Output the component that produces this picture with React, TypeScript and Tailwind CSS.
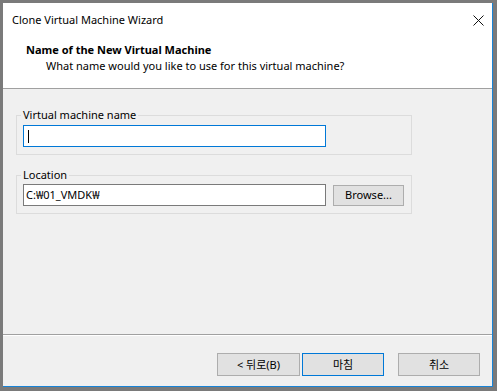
import React from 'react';

const font = "font-['Noto_Sans','Noto_Sans_CJK_KR',sans-serif]";

const CloseIcon: React.FC = () => (
  <svg width="11" height="11" viewBox="0 0 11 11" className="block">
    <path d="M0.5 0.5 L10.5 10.5 M10.5 0.5 L0.5 10.5" stroke="#111" strokeWidth="1" />
  </svg>
);

const App: React.FC = () => {
  return (
    <div className={`w-[497px] h-[391px] bg-[#7a7a7a] pt-[3px] pl-[3px] pr-[4px] pb-[4px] text-[11px] text-black ${font}`}>
      <div className="h-full flex flex-col bg-[#f0f0f0] border-r border-b border-[#1883d7]">
        {/* title bar */}
        <div className="h-[34px] bg-white flex items-center justify-between pl-[9px] pr-[8px]">
          <span className="leading-4">Clone Virtual Machine Wizard</span>
          <CloseIcon />
        </div>

        {/* header */}
        <div className="h-[52px] bg-white pt-[5px] pl-[23px] border-b border-[#a0a0a0]">
          <div className="font-bold leading-4">Name of the New Virtual Machine</div>
          <div className="leading-4 pl-[20px]">What name would you like to use for this virtual machine?</div>
        </div>

        {/* body */}
        <div className="flex-1 border-b border-[#a0a0a0] pl-[13px]">
          <fieldset className="mt-[18px] w-[396px] border border-[#dcdcdc] pl-[6px] pb-[7px]">
            <legend className="-ml-[2px] px-[2px] leading-4">Virtual machine name</legend>
            <div className="mt-[2px] w-[303px] h-[22px] bg-white border border-[#0078d7] flex items-center pl-[4px]">
              <div className="w-px h-[13px] bg-black" />
            </div>
          </fieldset>

          <fieldset className="mt-[12px] w-[396px] border border-[#dcdcdc] pl-[6px] pb-[7px]">
            <legend className="-ml-[2px] px-[2px] leading-4">Location</legend>
            <div className="mt-px flex items-center gap-[7px]">
              <div className="w-[303px] h-[22px] bg-white border border-[#7a7a7a] flex items-center pl-[2px] leading-4">
                C:₩01_VMDK₩
              </div>
              <button className="w-[71px] h-[21px] bg-[#e1e1e1] border border-[#adadad] leading-4">
                Browse...
              </button>
            </div>
          </fieldset>
        </div>

        {/* footer */}
        <div className="h-[51px] border-t border-white flex items-start justify-end pt-[17px] pr-[12px]">
          <button className="w-[83px] h-[23px] bg-[#e1e1e1] border border-[#adadad] leading-4">
            &lt; 뒤로(B)
          </button>
          <button className="ml-[2px] w-[82px] h-[23px] bg-[#e1e1e1] border border-[#0078d7] leading-4">
            마침
          </button>
          <button className="ml-[14px] w-[82px] h-[23px] bg-[#e1e1e1] border border-[#adadad] leading-4">
            취소
          </button>
        </div>
      </div>
    </div>
  );
};

export default App;
